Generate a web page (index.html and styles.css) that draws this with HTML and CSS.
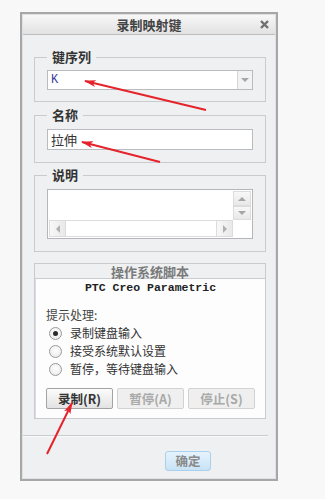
FILE: index.html
```html
<!DOCTYPE html>
<html lang="zh-CN">
<head>
    <meta charset="UTF-8">
    <title>录制映射键</title>
    <link rel="stylesheet" href="styles.css">
</head>
<body>
    <div class="dialog">
        <div class="frame">
            <div class="titlebar">
                <span></span>
                <span class="title">录制映射键</span>
                <span class="close">
                    <svg width="9" height="9" viewBox="0 0 9 9"><path d="M1 1L8 8M8 1L1 8" stroke="#6f6f6f" stroke-width="2.4"/></svg>
                </span>
            </div>

            <div class="content">
                <fieldset class="group group-keys">
                    <legend>键序列</legend>
                    <div class="combo">
                        <span class="combo-value">K</span>
                        <span class="combo-btn"><span class="tri-down"></span></span>
                    </div>
                </fieldset>

                <fieldset class="group">
                    <legend>名称</legend>
                    <div class="field">拉伸</div>
                </fieldset>

                <fieldset class="group group-notes">
                    <legend>说明</legend>
                    <div class="textbox">
                        <div class="text-area"></div>
                        <div class="vscroll">
                            <span class="sbtn"><span class="tri-up"></span></span>
                            <span class="sbtn"><span class="tri-down"></span></span>
                        </div>
                        <div class="hscroll">
                            <span class="sbtn"><span class="tri-left"></span></span>
                            <span class="track"></span>
                            <span class="sbtn"><span class="tri-right"></span></span>
                        </div>
                        <div class="corner"></div>
                    </div>
                </fieldset>

                <div class="script-panel">
                    <div class="panel-head">操作系统脚本</div>
                    <div class="panel-body">
                        <p class="app-name">PTC Creo Parametric</p>
                        <p class="prompt">提示处理:</p>
                        <label class="radio"><span class="dot checked"></span>录制键盘输入</label>
                        <label class="radio"><span class="dot"></span>接受系统默认设置</label>
                        <label class="radio"><span class="dot"></span>暂停，等待键盘输入</label>
                        <div class="actions">
                            <button class="btn">录制(R)</button>
                            <button class="btn" disabled>暂停(A)</button>
                            <button class="btn" disabled>停止(S)</button>
                        </div>
                    </div>
                </div>
            </div>

            <div class="divider"></div>

            <div class="footer">
                <button class="btn-ok">确定</button>
            </div>
        </div>
    </div>

    <!-- red annotation arrows drawn over the dialog -->
    <svg class="marks" width="325" height="499" viewBox="0 0 325 499">
        <defs>
            <marker id="head" viewBox="0 0 12 7" refX="11" refY="3.5" markerWidth="12" markerHeight="7" markerUnits="userSpaceOnUse" orient="auto">
                <path d="M0 0L12 3.5L0 7L3 3.5z" fill="#e5232a"/>
            </marker>
        </defs>
        <line x1="206" y1="110" x2="85" y2="81" stroke="#e5232a" stroke-width="2" marker-end="url(#head)"/>
        <line x1="160" y1="162" x2="82" y2="142" stroke="#e5232a" stroke-width="2" marker-end="url(#head)"/>
        <line x1="47" y1="454" x2="72" y2="403" stroke="#e5232a" stroke-width="2" marker-end="url(#head)"/>
    </svg>
</body>
</html>
```

FILE: styles.css
```css
* {
    box-sizing: border-box;
}

body {
    margin: 0;
    height: 499px;
    background: #f8f8f8;
    font-family: "Noto Sans CJK SC", "Noto Sans", sans-serif;
    color: #333;
    position: relative;
}

.dialog {
    margin: 12px 0 0 20px;
    width: 258px;
    height: 469px;
    border: 2px solid #a7a7a7;
    background: #eef0f2;
}

.frame {
    height: 100%;
    border: 1px solid #dfe1e4;
    display: flex;
    flex-direction: column;
}

.titlebar {
    height: 20px;
    background: linear-gradient(#f7f7f7, #e2e2e2);
    border-bottom: 1px solid #bdbdbd;
    display: grid;
    grid-template-columns: 1fr auto 1fr;
    align-items: center;
}

.title {
    font-size: 13px;
    font-weight: bold;
    color: #444;
    line-height: 18px;
}

.close {
    justify-self: end;
    margin-right: 6px;
    display: flex;
}

.content {
    padding: 13px 9px 0 11px;
}

.group {
    margin: 4px 0 0;
    padding: 5px 12px 12px;
    border: 1px solid #c9cbcf;
    min-width: 0;
}

.group-keys {
    margin-top: 0;
    padding-top: 4px;
    padding-bottom: 11px;
}

.group-notes {
    margin-top: 3px;
}

.group legend {
    padding: 0 5px;
    font-size: 13px;
    font-weight: bold;
    line-height: 18px;
    color: #333;
}

.combo {
    height: 20px;
    border: 1px solid #b9bbbf;
    background: #fff;
    display: flex;
}

.combo-value {
    flex: 1;
    padding-left: 3px;
    font-family: "Liberation Mono", monospace;
    font-size: 12px;
    line-height: 18px;
    color: #40409a;
}

.combo-btn {
    width: 15px;
    background: #f2f3f4;
    border-left: 1px solid #d3d5d8;
    display: flex;
    align-items: center;
    justify-content: center;
}

.field {
    height: 21px;
    border: 1px solid #b9bbbf;
    background: #fff;
    padding-left: 3px;
    font-size: 13px;
    line-height: 19px;
    color: #333;
}

.textbox {
    height: 50px;
    border: 1px solid #b4b6ba;
    background: #fff;
    padding: 1px;
    display: grid;
    grid-template-columns: 1fr 18px;
    grid-template-rows: 29px 17px;
}

.vscroll {
    display: grid;
    grid-template-rows: 15px 14px;
}

.hscroll {
    display: grid;
    grid-template-columns: 17px 1fr 17px;
}

.sbtn {
    background: linear-gradient(#f8f8f8, #e8e8e8);
    border: 1px solid #dcdcdc;
    display: flex;
    align-items: center;
    justify-content: center;
}

.hscroll .sbtn {
    background: linear-gradient(90deg, #f8f8f8, #e9e9e9);
}

.track {
    background: #fff;
    border-top: 1px solid #dcdcdc;
    border-bottom: 1px solid #dcdcdc;
}

.tri-up,
.tri-down,
.tri-left,
.tri-right {
    width: 0;
    height: 0;
    border: 4px solid transparent;
}

.tri-up {
    border-bottom-color: #a6a6a6;
    margin-top: -4px;
}

.tri-down {
    border-top-color: #a6a6a6;
    margin-bottom: -4px;
}

.tri-left {
    border-right-color: #b0b0b0;
    margin-left: -4px;
}

.tri-right {
    border-left-color: #b0b0b0;
    margin-right: -4px;
}

.script-panel {
    margin-top: 11px;
    border: 1px solid #c9cbcf;
}

.panel-head {
    height: 15px;
    text-align: center;
    font-size: 13px;
    font-weight: bold;
    line-height: 15px;
    color: #7a7a7a;
    border-bottom: 1px solid #c9cbcf;
}

.panel-body {
    background: #fdfdfd;
    border-left: 1px solid #dcdde0;
    padding: 1px 10px 9px;
}

.panel-body p {
    margin: 0;
}

.app-name {
    text-align: center;
    font-family: "Liberation Mono", monospace;
    font-weight: bold;
    font-size: 11.5px;
    line-height: 16px;
    color: #222;
}

.prompt {
    margin-top: 10px !important;
    font-size: 12px;
    line-height: 18px;
    color: #444;
}

.radio {
    display: flex;
    align-items: center;
    gap: 8px;
    padding-left: 3px;
    font-size: 12px;
    line-height: 18px;
    color: #333;
}

.dot {
    width: 13px;
    height: 13px;
    border-radius: 50%;
    border: 1px solid #9a9a9a;
    background: radial-gradient(circle at 50% 40%, #fff, #e6e6e6);
    display: flex;
    align-items: center;
    justify-content: center;
}

.dot.checked::after {
    content: "";
    width: 5px;
    height: 5px;
    border-radius: 50%;
    background: #2a2a2a;
}

.actions {
    margin-top: 10px;
    display: flex;
    gap: 4px;
}

.btn {
    width: 67px;
    height: 21px;
    padding: 0;
    border: 1px solid #a3a3a3;
    border-radius: 2px;
    background: linear-gradient(#fbfbfb, #e3e3e3);
    font-family: inherit;
    font-size: 12.5px;
    font-weight: bold;
    line-height: 19px;
    color: #333;
}

.btn:disabled {
    border-color: #d2d2d2;
    background: #efefef;
    color: #a9a9a9;
}

.divider {
    margin: 16px 7px 0 0;
    border-top: 1px solid #c9cbcf;
    border-bottom: 1px solid #f9f9f9;
}

.footer {
    padding: 10px 0 0 142px;
}

.btn-ok {
    width: 46px;
    height: 20px;
    padding: 0;
    border: 1px solid #a9d0ec;
    border-radius: 3px;
    background: linear-gradient(#e6f3fc, #c8e3f6);
    font-family: inherit;
    font-size: 12.5px;
    font-weight: bold;
    line-height: 18px;
    color: #8a8a8a;
}

.marks {
    position: absolute;
    top: 0;
    left: 0;
    pointer-events: none;
}
```
